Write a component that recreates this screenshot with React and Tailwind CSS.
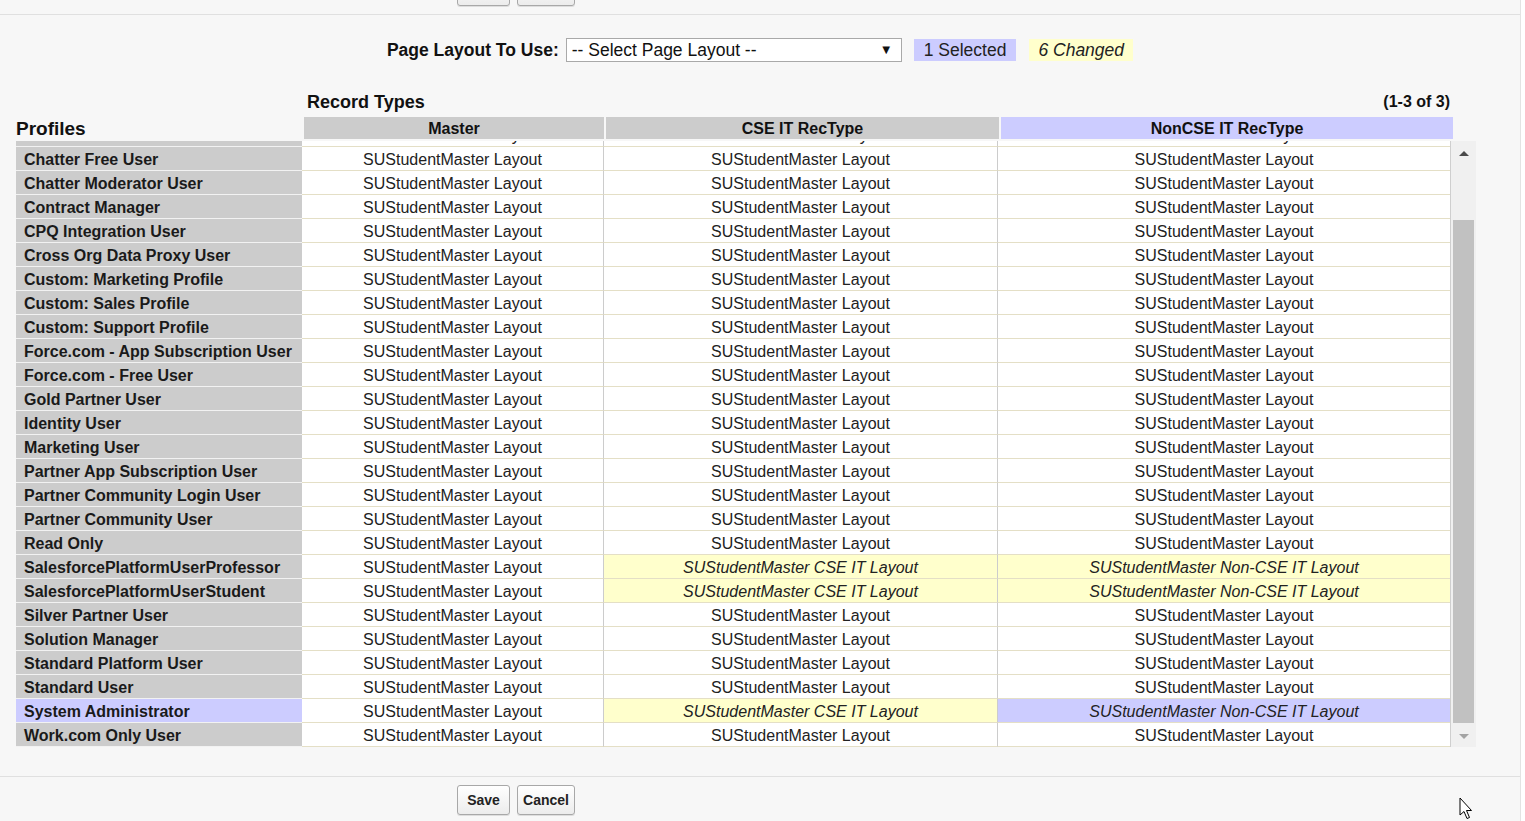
import React from "react";

const profiles = [
  { name: "Chatter External User" },
  { name: "Chatter Free User" },
  { name: "Chatter Moderator User" },
  { name: "Contract Manager" },
  { name: "CPQ Integration User" },
  { name: "Cross Org Data Proxy User" },
  { name: "Custom: Marketing Profile" },
  { name: "Custom: Sales Profile" },
  { name: "Custom: Support Profile" },
  { name: "Force.com - App Subscription User" },
  { name: "Force.com - Free User" },
  { name: "Gold Partner User" },
  { name: "Identity User" },
  { name: "Marketing User" },
  { name: "Partner App Subscription User" },
  { name: "Partner Community Login User" },
  { name: "Partner Community User" },
  { name: "Read Only" },
  { name: "SalesforcePlatformUserProfessor", changed: true },
  { name: "SalesforcePlatformUserStudent", changed: true },
  { name: "Silver Partner User" },
  { name: "Solution Manager" },
  { name: "Standard Platform User" },
  { name: "Standard User" },
  { name: "System Administrator", changed: true, selected: true },
  { name: "Work.com Only User" },
];

const DEFAULT = "SUStudentMaster Layout";

const Button = ({ width, children }) => (
  <button
    className={`${width} h-[30px] rounded-[3px] border border-[#a8a8a8] bg-gradient-to-b from-white to-[#ececec] text-[14px] font-bold text-[#222] shadow-[0_1px_0_#ddd] flex items-center justify-center`}
  >
    {children}
  </button>
);

const Buttons = () => (
  <div className="flex gap-[7px] pl-[457px]">
    <Button width="w-[53px]">Save</Button>
    <Button width="w-[58px]">Cancel</Button>
  </div>
);

const Cell = ({ width, border, tone, italic, children }) => {
  const bg =
    tone === "selected" ? "bg-[#ccccff]" : tone === "changed" ? "bg-[#ffffcc]" : "bg-white";
  return (
    <div
      className={`${width} ${bg} ${border ? "border-r border-r-[#cccccc]" : ""} ${
        italic ? "italic" : ""
      } h-full flex items-center justify-center pt-[2px] border-b border-b-[#e4dfc6] text-[16px] text-[#222] whitespace-nowrap`}
    >
      {children}
    </div>
  );
};

const ProfileRow = ({ p }) => (
  <div className="flex h-[24px]">
    <div
      className={`w-[286px] h-full flex items-center pl-2 pt-[2px] border-b border-b-[#f2f2f2] text-[16px] font-bold text-[#1a1a1a] whitespace-nowrap ${
        p.selected ? "bg-[#ccccff]" : "bg-[#cccccc]"
      }`}
    >
      {p.name}
    </div>
    <Cell width="w-[302px]" border>
      {DEFAULT}
    </Cell>
    <Cell width="w-[394px]" border tone={p.changed ? "changed" : null} italic={p.changed}>
      {p.changed ? "SUStudentMaster CSE IT Layout" : DEFAULT}
    </Cell>
    <Cell
      width="w-[452px]"
      tone={p.selected ? "selected" : p.changed ? "changed" : null}
      italic={p.changed}
    >
      {p.changed ? "SUStudentMaster Non-CSE IT Layout" : DEFAULT}
    </Cell>
  </div>
);

const Cursor = () => (
  <svg
    className="absolute left-[1459px] top-[797px]"
    width="14"
    height="24"
    viewBox="0 0 14 24"
  >
    <path
      d="M1 1 L1 18 L5 14.5 L8 21.5 L10.5 20.5 L7.5 13.5 L12.5 13.5 Z"
      fill="white"
      stroke="black"
      strokeWidth="1"
    />
  </svg>
);

export default function App() {
  return (
    <div
      className="relative w-[1525px] h-[821px] overflow-hidden flex bg-white"
      style={{ fontFamily: '"Liberation Sans", Arial, sans-serif' }}
    >
      <div className="w-[1521px] h-full bg-[#f7f7f7] border-r border-r-[#e3e3e3] flex flex-col">
        {/* top buttons, scrolled mostly out of view */}
        <div className="h-[15px] overflow-hidden border-b border-b-[#e0e0e0]">
          <div className="-mt-[24px]">
            <Buttons />
          </div>
        </div>

        {/* page layout chooser */}
        <div className="mt-[23px] h-[24px] flex items-center justify-center">
          <span className="text-[17.5px] font-bold text-[#111]">Page Layout To Use:</span>
          <div className="ml-[7px] w-[336px] h-[24px] bg-white border border-[#a9a9a9] flex items-center justify-between pl-[5px] pr-[8px] text-[17.5px] text-[#111]">
            <span>-- Select Page Layout --</span>
            <span className="text-[13px]">▼</span>
          </div>
          <div className="ml-[12px] h-[22px] px-[10px] bg-[#ccccff] flex items-center text-[17.5px] text-[#222]">
            1 Selected
          </div>
          <div className="ml-[13px] h-[22px] px-[9px] bg-[#ffffcc] flex items-center text-[17.5px] italic text-[#222]">
            6 Changed
          </div>
        </div>

        {/* table headings */}
        <div className="mt-[28px] flex pl-[16px]">
          <div className="w-[288px] flex items-end">
            <div className="h-[22px] flex items-center pt-[2px] text-[19px] font-bold text-[#111]">
              Profiles
            </div>
          </div>
          <div className="w-[1149px] flex flex-col">
            <div className="h-[24px] flex items-center justify-between pl-[3px] pr-[3px]">
              <span className="text-[18px] font-bold text-[#111]">Record Types</span>
              <span className="text-[16px] font-bold text-[#111]">(1-3 of 3)</span>
            </div>
            <div className="mt-[3px] h-[22px] flex gap-[2px] text-[16px] font-bold text-[#111]">
              <div className="w-[300px] pt-[1px] bg-[#cccccc] flex items-center justify-center">
                Master
              </div>
              <div className="w-[393px] pt-[1px] bg-[#cccccc] flex items-center justify-center">
                CSE IT RecType
              </div>
              <div className="w-[452px] pt-[1px] bg-[#ccccff] flex items-center justify-center">
                NonCSE IT RecType
              </div>
            </div>
          </div>
        </div>

        {/* scrolling body */}
        <div className="mt-[2px] flex pl-[16px]">
          <div className="w-[1434px] h-[606px] overflow-hidden">
            <div className="-mt-[18px]">
              {profiles.map((p) => (
                <ProfileRow key={p.name} p={p} />
              ))}
            </div>
          </div>
          <div className="w-[26px] h-[606px] bg-[#f0f0f0] border-l border-l-[#cfcfcf] flex flex-col items-center">
            <div className="h-[79px] w-full flex justify-center pt-[10px]">
              <div className="w-0 h-0 border-l-[5px] border-r-[5px] border-b-[5px] border-l-transparent border-r-transparent border-b-[#4a4a4a]" />
            </div>
            <div className="w-[21px] h-[503px] bg-[#c1c1c1]" />
            <div className="flex-1 w-full flex justify-center pt-[11px]">
              <div className="w-0 h-0 border-l-[5px] border-r-[5px] border-t-[5px] border-l-transparent border-r-transparent border-t-[#a3a3a3]" />
            </div>
          </div>
        </div>

        {/* bottom buttons */}
        <div className="mt-[29px] border-t border-t-[#e0e0e0] pt-[8px]">
          <Buttons />
        </div>
      </div>
      <Cursor />
    </div>
  );
}
